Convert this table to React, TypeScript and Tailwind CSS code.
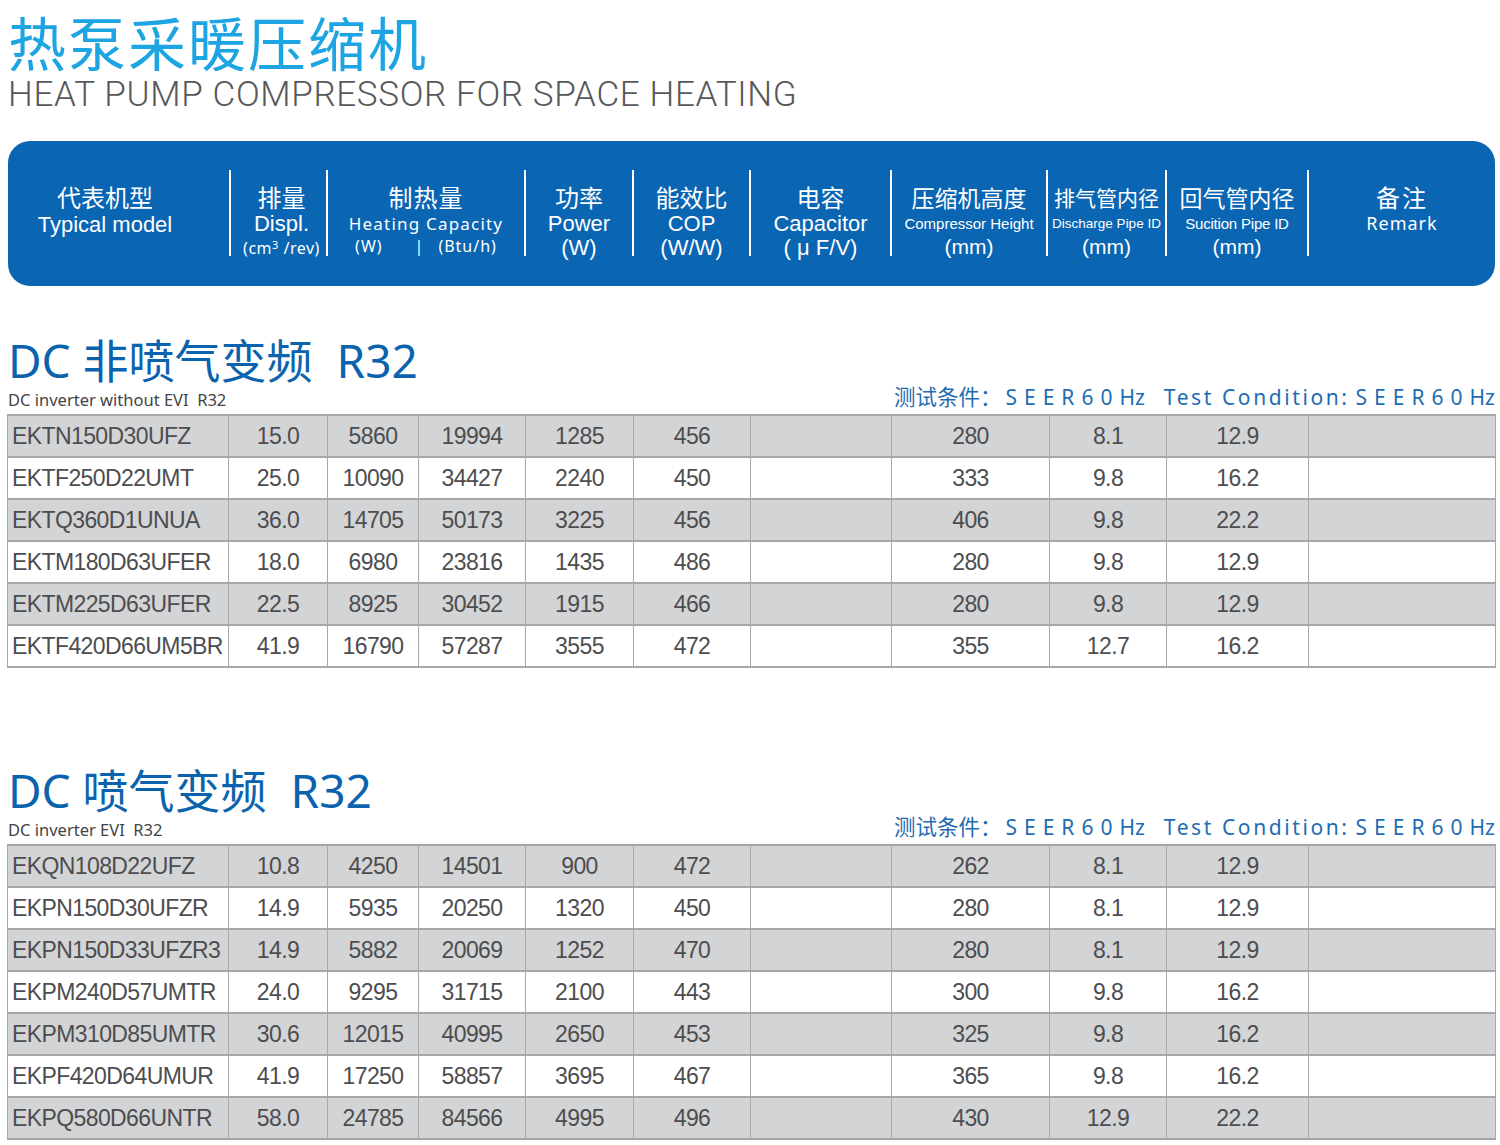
import React from "react";

const rows1: string[][] = [
  ["EKTN150D30UFZ", "15.0", "5860", "19994", "1285", "456", "", "280", "8.1", "12.9", ""],
  ["EKTF250D22UMT", "25.0", "10090", "34427", "2240", "450", "", "333", "9.8", "16.2", ""],
  ["EKTQ360D1UNUA", "36.0", "14705", "50173", "3225", "456", "", "406", "9.8", "22.2", ""],
  ["EKTM180D63UFER", "18.0", "6980", "23816", "1435", "486", "", "280", "9.8", "12.9", ""],
  ["EKTM225D63UFER", "22.5", "8925", "30452", "1915", "466", "", "280", "9.8", "12.9", ""],
  ["EKTF420D66UM5BR", "41.9", "16790", "57287", "3555", "472", "", "355", "12.7", "16.2", ""],
];

const rows2: string[][] = [
  ["EKQN108D22UFZ", "10.8", "4250", "14501", "900", "472", "", "262", "8.1", "12.9", ""],
  ["EKPN150D30UFZR", "14.9", "5935", "20250", "1320", "450", "", "280", "8.1", "12.9", ""],
  ["EKPN150D33UFZR3", "14.9", "5882", "20069", "1252", "470", "", "280", "8.1", "12.9", ""],
  ["EKPM240D57UMTR", "24.0", "9295", "31715", "2100", "443", "", "300", "9.8", "16.2", ""],
  ["EKPM310D85UMTR", "30.6", "12015", "40995", "2650", "453", "", "325", "9.8", "16.2", ""],
  ["EKPF420D64UMUR", "41.9", "17250", "58857", "3695", "467", "", "365", "9.8", "16.2", ""],
  ["EKPQ580D66UNTR", "58.0", "24785", "84566", "4995", "496", "", "430", "12.9", "22.2", ""],
];

const colWidths = [221, 99, 91, 107, 108, 117, 141, 158, 117, 142, 187];

function DataTable({ rows }: { rows: string[][] }) {
  return (
    <table className="ml-[7px] w-[1488px] table-fixed border-collapse border border-[#b4b4b4] font-['Liberation_Sans',Arial,sans-serif] text-[23px] text-[#4d4d4f] tracking-[-0.6px]">
      <colgroup>
        {colWidths.map((w, i) => (
          <col key={i} style={{ width: w }} />
        ))}
      </colgroup>
      <tbody>
        {rows.map((r, ri) => (
          <tr
            key={ri}
            className={ri % 2 === 0 ? "h-[42px] bg-[#d3d4d6]" : "h-[42px] bg-white"}
          >
            {r.map((c, ci) => (
              <td
                key={ci}
                className={
                  ci === 0
                    ? "border-x border-y-2 border-[#a7a7a7] pl-[4px] text-left whitespace-nowrap p-0"
                    : "border-x border-y-2 border-[#a7a7a7] text-center p-0"
                }
              >
                {c}
              </td>
            ))}
          </tr>
        ))}
      </tbody>
    </table>
  );
}

function Divider() {
  return <div className="mt-[29px] h-[86px] w-[2px] shrink-0 bg-white" />;
}

function SectionHead({ title, sub }: { title: string; sub: string }) {
  return (
    <div className="ml-[8px] w-[1487px]">
      <div className="font-['Noto_Sans','Noto_Sans_CJK_SC',sans-serif] text-[46px] leading-[48px] text-[#0b63ae] whitespace-pre">
        {title}
      </div>
      <div className="flex items-end justify-between">
        <div className="font-['Noto_Sans','Noto_Sans_CJK_SC',sans-serif] text-[16.5px] leading-[20px] text-[#444446] whitespace-pre">
          {sub}
        </div>
        <div className="font-['Noto_Sans','Noto_Sans_CJK_SC',sans-serif] text-[21px] leading-[26px] text-[#1f6cb3] whitespace-nowrap">
          <span className="text-[21.5px]">测试条件：</span>
          <span className="ml-[4px] tracking-[7px]">SEER60</span>
          <span>Hz</span>
          <span className="ml-[19px] tracking-[2.6px]">Test Condition:</span>
          <span className="ml-[6px] tracking-[7px]">SEER60</span>
          <span>Hz</span>
        </div>
      </div>
    </div>
  );
}

export default function App() {
  const cjk = "font-['Noto_Sans','Noto_Sans_CJK_SC',sans-serif]";
  return (
    <div className="w-[1500px] min-h-[1145px] bg-white">
      <div className="pl-[8px] pt-[8px]">
        <div className="font-['Noto_Sans_CJK_SC',sans-serif] text-[58px] leading-[66px] tracking-[2px] text-[#1da4e2]">
          热泵采暖压缩机
        </div>
        <div className="font-['Roboto',sans-serif] font-light text-[35px] leading-[42px] text-[#58585a] tracking-[0.65px]">
          HEAT PUMP COMPRESSOR FOR SPACE HEATING
        </div>
      </div>

      <div className="ml-[8px] mt-[25px] flex h-[145px] w-[1487px] rounded-[22px] bg-[#0a65b3] text-white">
        <div className="flex w-[221px] shrink-0 flex-col items-center pr-[27px] pt-[44px]">
          <div className={cjk + " text-[24px] leading-[26px]"}>代表机型</div>
          <div className="font-['Liberation_Sans',sans-serif] text-[22px] leading-[27px]">Typical model</div>
        </div>
        <Divider />
        <div className="flex w-[95px] shrink-0 flex-col items-center pl-[6px] pt-[44px]">
          <div className={cjk + " text-[24px] leading-[26px]"}>排量</div>
          <div className="font-['Liberation_Sans',sans-serif] text-[22px] leading-[26px]">Displ.</div>
          <div className={cjk + " text-[16px] leading-[22px] tracking-[0.5px] whitespace-nowrap"}>
            (cm<sup className="text-[11px]">3</sup> /rev)
          </div>
        </div>
        <Divider />
        <div className="flex w-[196px] shrink-0 flex-col items-center pt-[44px]">
          <div className={cjk + " text-[24px] leading-[26px] tracking-[1px]"}>制热量</div>
          <div className={cjk + " text-[17px] leading-[25px] tracking-[1.2px]"}>Heating Capacity</div>
          <div className={cjk + " text-[16px] leading-[20px] tracking-[1px] whitespace-nowrap"}>
            <span>(W)</span>
            <span className="ml-[32px] mr-[14px]">|</span>
            <span>(Btu/h)</span>
          </div>
        </div>
        <Divider />
        <div className="flex w-[106px] shrink-0 flex-col items-center pt-[44px]">
          <div className={cjk + " text-[24px] leading-[26px]"}>功率</div>
          <div className="font-['Liberation_Sans',sans-serif] text-[22px] leading-[26px]">Power</div>
          <div className="font-['Liberation_Sans',sans-serif] text-[22px] leading-[22px]">(W)</div>
        </div>
        <Divider />
        <div className="flex w-[115px] shrink-0 flex-col items-center pt-[44px]">
          <div className={cjk + " text-[24px] leading-[26px]"}>能效比</div>
          <div className="font-['Liberation_Sans',sans-serif] text-[22px] leading-[26px]">COP</div>
          <div className="font-['Liberation_Sans',sans-serif] text-[22px] leading-[22px]">(W/W)</div>
        </div>
        <Divider />
        <div className="flex w-[139px] shrink-0 flex-col items-center pt-[44px]">
          <div className={cjk + " text-[24px] leading-[26px]"}>电容</div>
          <div className="font-['Liberation_Sans',sans-serif] text-[22px] leading-[26px]">Capacitor</div>
          <div className="font-['Liberation_Sans',sans-serif] text-[22px] leading-[22px] whitespace-pre">( μ F/V)</div>
        </div>
        <Divider />
        <div className="flex w-[154px] shrink-0 flex-col items-center pt-[44px]">
          <div className={cjk + " text-[23px] leading-[26px]"}>压缩机高度</div>
          <div className="font-['Liberation_Sans',sans-serif] text-[15px] leading-[25px] whitespace-nowrap">Compressor Height</div>
          <div className="font-['Liberation_Sans',sans-serif] text-[21px] leading-[22px]">(mm)</div>
        </div>
        <Divider />
        <div className="flex w-[117px] shrink-0 flex-col items-center pt-[44px]">
          <div className={cjk + " text-[21px] leading-[26px]"}>排气管内径</div>
          <div className="font-['Liberation_Sans',sans-serif] text-[13.5px] leading-[25px] whitespace-nowrap">Discharge Pipe ID</div>
          <div className="font-['Liberation_Sans',sans-serif] text-[21px] leading-[22px]">(mm)</div>
        </div>
        <Divider />
        <div className="flex w-[140px] shrink-0 flex-col items-center pt-[44px]">
          <div className={cjk + " text-[23px] leading-[26px]"}>回气管内径</div>
          <div className="font-['Liberation_Sans',sans-serif] text-[15px] leading-[25px] tracking-[-0.2px] whitespace-nowrap">Sucition Pipe ID</div>
          <div className="font-['Liberation_Sans',sans-serif] text-[21px] leading-[22px]">(mm)</div>
        </div>
        <Divider />
        <div className="flex w-[186px] shrink-0 flex-col items-center pt-[44px]">
          <div className={cjk + " text-[24px] leading-[26px] tracking-[2px]"}>备注</div>
          <div className={cjk + " text-[18px] leading-[24px] tracking-[1px]"}>Remark</div>
        </div>
      </div>

      <div className="mt-[50px]">
        <SectionHead title="DC 非喷气变频  R32" sub="DC inverter without EVI  R32" />
      </div>
      <div className="mt-[4px]">
        <DataTable rows={rows1} />
      </div>

      <div className="mt-[98px]">
        <SectionHead title="DC 喷气变频  R32" sub="DC inverter EVI  R32" />
      </div>
      <div className="mt-[4px]">
        <DataTable rows={rows2} />
      </div>
    </div>
  );
}
